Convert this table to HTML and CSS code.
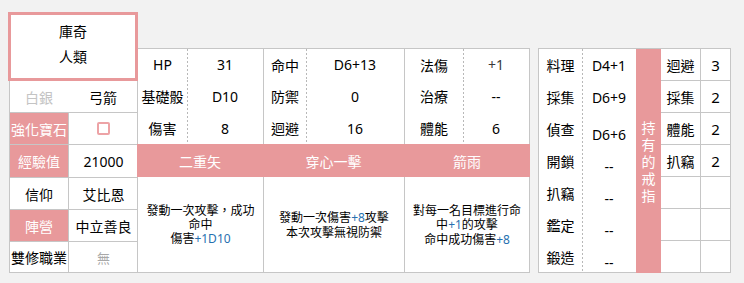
FILE: index.html
```html
<!DOCTYPE html>
<html lang="zh-Hant">
<head>
<meta charset="utf-8">
<title>角色卡 - 庫奇</title>
<link rel="stylesheet" href="styles.css">
</head>
<body>
<div class="sheet">
  <div class="left">
    <div class="card">
      <div class="card-line">庫奇</div>
      <div class="card-line">人類</div>
    </div>
    <div class="info">
      <div class="cell r1 muted">白銀</div>
      <div class="cell r1">弓箭</div>
      <div class="cell r2 tag">強化寶石</div>
      <div class="cell r2 split"><span class="check"></span></div>
      <div class="cell r3 tag">經驗值</div>
      <div class="cell r3 split">21000</div>
      <div class="cell r4">信仰</div>
      <div class="cell r4 split">艾比恩</div>
      <div class="cell r5 tag">陣營</div>
      <div class="cell r5 split">中立善良</div>
      <div class="cell r6">雙修職業</div>
      <div class="cell r6 split faint">無</div>
    </div>
  </div>

  <div class="mid">
    <div class="stats">
      <div class="st solid">HP</div><div class="st dot">31</div>
      <div class="st solid">命中</div><div class="st dot">D6+13</div>
      <div class="st solid">法傷</div><div class="st dot end soft">+1</div>

      <div class="st solid">基礎骰</div><div class="st dot">D10</div>
      <div class="st solid">防禦</div><div class="st dot">0</div>
      <div class="st solid">治療</div><div class="st dot end">--</div>

      <div class="st solid">傷害</div><div class="st dot">8</div>
      <div class="st solid">迴避</div><div class="st dot">16</div>
      <div class="st solid">體能</div><div class="st dot end">6</div>
    </div>
    <div class="skills">
      <div class="sk-head">二重矢</div>
      <div class="sk-head">穿心一擊</div>
      <div class="sk-head">箭雨</div>
      <div class="sk-body"><p class="sk-text">發動一次攻擊，成功命中<br>傷害<span class="num">+1D10</span></p></div>
      <div class="sk-body"><p class="sk-text">發動一次傷害<span class="num">+8</span>攻擊<br>本次攻擊無視防禦</p></div>
      <div class="sk-body last"><p class="sk-text">對每一名目標進行命中<span class="num">+1</span>的攻擊<br>命中成功傷害<span class="num">+8</span></p></div>
    </div>
  </div>

  <div class="right">
    <div class="crafts">
      <div class="cr">料理</div>
      <div class="cr">採集</div>
      <div class="cr">偵查</div>
      <div class="cr">開鎖</div>
      <div class="cr">扒竊</div>
      <div class="cr">鑑定</div>
      <div class="cr">鍛造</div>
    </div>
    <div class="craft-vals">
      <div class="cr">D4+1</div>
      <div class="cr">D6+9</div>
      <div class="cr low">D6+6</div>
      <div class="cr low">--</div>
      <div class="cr low">--</div>
      <div class="cr low">--</div>
      <div class="cr low">--</div>
    </div>
    <div class="ring-tag">持<br>有<br>的<br>戒<br>指</div>
    <div class="rings">
      <div class="rg">迴避</div><div class="rg val">3</div>
      <div class="rg">採集</div><div class="rg val">2</div>
      <div class="rg">體能</div><div class="rg val">2</div>
      <div class="rg">扒竊</div><div class="rg val">2</div>
      <div class="rg"></div><div class="rg val"></div>
      <div class="rg"></div><div class="rg val"></div>
      <div class="rg last"></div><div class="rg val last"></div>
    </div>
  </div>
</div>
</body>
</html>
```

FILE: styles.css
```css
/* Character sheet: name card, info table, stats, skills, crafts and rings */
:root {
  --pink: #e8999b;
  --line: #c6c6c6;
  --dots: #b8b8b8;
  --blue: #2770b0;
}

* {
  box-sizing: border-box;
}

body {
  margin: 0;
  background: #f2f2f2;
  color: #000;
  font-family: "Noto Sans", "Noto Sans CJK TC", sans-serif;
  font-size: 14px;
}

.sheet {
  display: flex;
  align-items: flex-start;
  padding: 12px 0 0 8px;
}

/* ---- left column ---- */
.left {
  width: 129px;
  display: flex;
  flex-direction: column;
}

.card {
  height: 69px;
  width: 130px;
  border: 3px solid var(--pink);
  background: #fff;
  padding-top: 4px;
  text-align: center;
  position: relative;
  z-index: 1;
}

.card-line {
  line-height: 25px;
  font-family: "Noto Sans CJK TC", sans-serif;
}

.info {
  margin-left: 1px;
  border-left: 1px solid var(--line);
  background: #fff;
  display: grid;
  grid-template-columns: 58px 70px;
  grid-template-rows: 32px 32px 33px 32px 32px 31px;
}

.cell {
  display: flex;
  align-items: center;
  justify-content: center;
  border-bottom: 1px solid var(--line);
  white-space: nowrap;
}

.cell.split {
  border-left: 1px solid var(--line);
}

.cell.tag {
  background: var(--pink);
  color: #fff;
}

.cell.muted {
  color: #c4c4c4;
}

.cell.faint {
  color: #a8a8a8;
  font-size: 13px;
}

.check {
  width: 13px;
  height: 13px;
  border: 2px solid #eda3a6;
  border-radius: 2px;
  background: #fff;
}

/* ---- middle block ---- */
.mid {
  margin-top: 36px;
  width: 393px;
  background: #fff;
}

.stats {
  display: grid;
  grid-template-columns: 50px 76px 43px 98px 59px 67px;
  grid-template-rows: 31px 32px 32px;
  border-top: 1px solid var(--line);
}

.st {
  display: flex;
  align-items: center;
  justify-content: center;
  white-space: nowrap;
}

.st.solid {
  border-left: 1px solid var(--line);
}

.st.dot {
  background: linear-gradient(to bottom, var(--dots) 50%, transparent 50%) left top / 1px 4px repeat-y;
}

.st.end {
  border-right: 1px solid var(--line);
}

.st.soft {
  color: #3a3a3a;
}

.skills {
  display: grid;
  grid-template-columns: 126px 141px 126px;
  grid-template-rows: 33px 96px;
}

.sk-head {
  background: var(--pink);
  color: #fff;
  display: flex;
  align-items: center;
  justify-content: center;
}

.sk-body {
  display: flex;
  align-items: center;
  justify-content: center;
  padding: 0 8px;
  border-left: 1px solid var(--line);
  border-bottom: 1px solid var(--line);
}

.sk-body.last {
  border-right: 1px solid var(--line);
}

.sk-text {
  margin: 0;
  text-align: center;
  font-size: 12px;
  line-height: 14px;
  font-family: "Noto Sans CJK TC", sans-serif;
}

.num {
  color: var(--blue);
  font-family: "Noto Sans", sans-serif;
}

/* ---- right block ---- */
.right {
  margin-top: 36px;
  margin-left: 8px;
  width: 193px;
  height: 225px;
  border: 1px solid var(--line);
  background: #fff;
  display: grid;
  grid-template-columns: 43px 54px 25px 69px;
}

.crafts,
.craft-vals {
  display: flex;
  flex-direction: column;
}

.craft-vals {
  background: linear-gradient(to bottom, var(--dots) 50%, transparent 50%) left top / 1px 4px repeat-y;
  overflow: hidden;
}

.cr {
  height: 32px;
  flex: none;
  display: flex;
  align-items: center;
  justify-content: center;
  white-space: nowrap;
}

.cr.low {
  padding-top: 10px;
}

.ring-tag {
  background: var(--pink);
  color: #fff;
  display: flex;
  align-items: center;
  justify-content: center;
  text-align: center;
  line-height: 17px;
  font-family: "Noto Sans CJK TC", sans-serif;
}

.rings {
  display: grid;
  grid-template-columns: 39px 30px;
  grid-template-rows: repeat(6, 32px) 31px;
}

.rg {
  display: flex;
  align-items: center;
  justify-content: center;
  border-bottom: 1px solid var(--line);
}

.rg.val {
  border-left: 1px solid var(--line);
  font-size: 15px;
}

.rg.last {
  border-bottom: none;
}
```
